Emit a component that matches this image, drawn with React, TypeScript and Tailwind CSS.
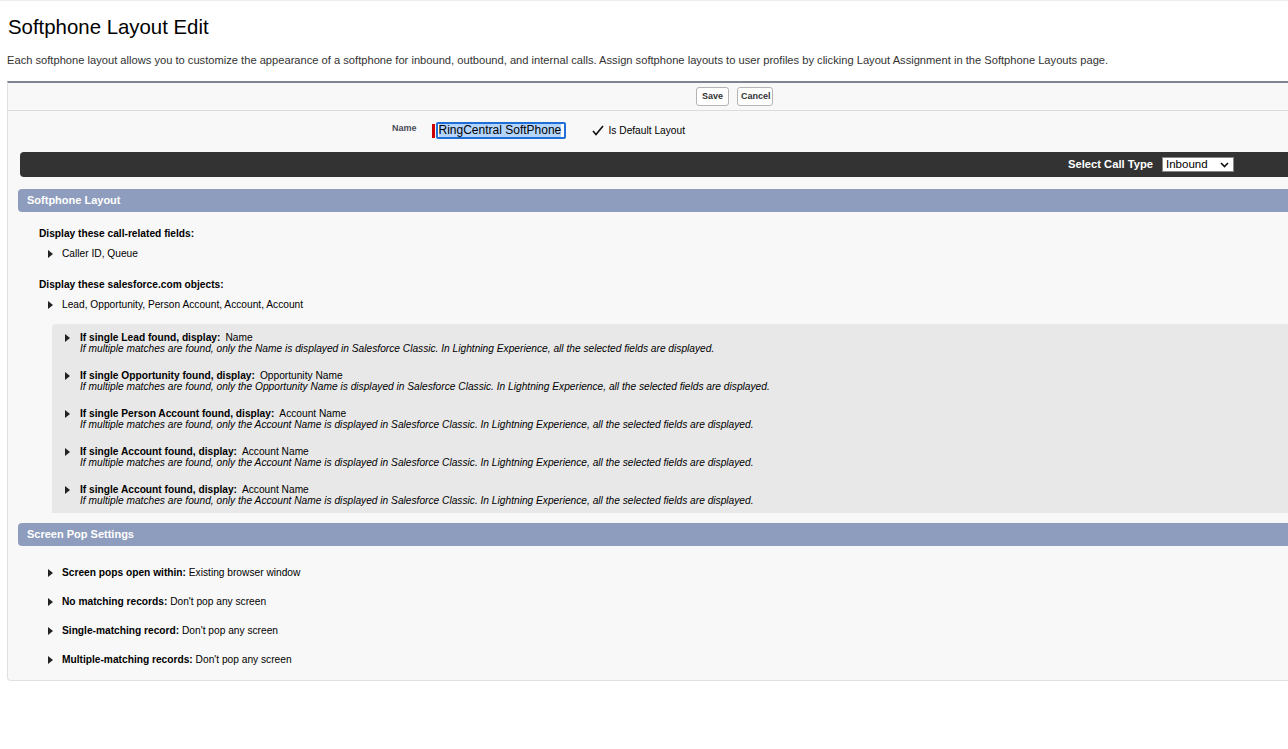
import React from "react";

const callFields = "Caller ID, Queue";
const objects = "Lead, Opportunity, Person Account, Account, Account";

interface ObjectRow {
  label: string;
  value: string;
  field: string;
}

const objectRows: ObjectRow[] = [
  { label: "If single Lead found, display:", value: "Name", field: "Name" },
  { label: "If single Opportunity found, display:", value: "Opportunity Name", field: "Opportunity Name" },
  { label: "If single Person Account found, display:", value: "Account Name", field: "Account Name" },
  { label: "If single Account found, display:", value: "Account Name", field: "Account Name" },
  { label: "If single Account found, display:", value: "Account Name", field: "Account Name" },
];

const popRows = [
  { label: "Screen pops open within:", value: "Existing browser window" },
  { label: "No matching records:", value: "Don't pop any screen" },
  { label: "Single-matching record:", value: "Don't pop any screen" },
  { label: "Multiple-matching records:", value: "Don't pop any screen" },
];

const Twisty: React.FC = () => (
  <svg width="5" height="8" viewBox="0 0 5 8" className="shrink-0">
    <path d="M0 0L5 4L0 8Z" fill="#222" />
  </svg>
);

const SectionHeader: React.FC<{ title: string }> = ({ title }) => (
  <div className="ml-[10px] h-[23px] flex items-center pl-[9px] bg-[#8e9dbd] rounded-l-[4px] text-white font-bold text-[11px]">
    {title}
  </div>
);

export default function App() {
  return (
    <div
      className="w-[1288px] h-[749px] overflow-hidden bg-white text-black border-t border-[#ececec]"
      style={{ fontFamily: '"Liberation Sans", Arial, sans-serif' }}
    >
      <h1 className="ml-[8px] mt-[14px] text-[20.4px] leading-[24px] font-normal">Softphone Layout Edit</h1>
      <p className="ml-[7px] mt-[14px] text-[11.15px] leading-[14px] text-[#333]">
        Each softphone layout allows you to customize the appearance of a softphone for inbound, outbound, and internal calls. Assign softphone layouts to user profiles by clicking Layout Assignment in the Softphone Layouts page.
      </p>

      {/* main panel */}
      <div className="ml-[7px] mt-[14px] w-[1310px] bg-[#f8f8f8] border-t-2 border-t-[#7d8494] border-l border-b border-[#e0e0e0] rounded-bl-[4px] pb-[14px]">
        {/* button row */}
        <div className="h-[28px] flex items-center border-b border-[#dcdcdc]">
          <div className="ml-[688px] flex gap-[8px]">
            <button className="h-[19px] px-[5px] bg-white border border-[#b5b5b5] rounded-[3px] text-[9px] font-bold text-[#333] leading-none w-[33px]">Save</button>
            <button className="h-[19px] px-[3px] bg-white border border-[#b5b5b5] rounded-[3px] text-[9px] font-bold text-[#333] leading-none w-[36px]">Cancel</button>
          </div>
        </div>

        {/* name row */}
        <div className="flex items-start pt-[11px] h-[41px]">
          <span className="ml-[384px] text-[9px] font-bold text-[#4a4a56] leading-[12px]">Name</span>
          <div className="ml-[15px] flex items-center">
            <div className="w-[3px] h-[14px] bg-[#c00]" />
            <div className="ml-[1px] w-[130px] h-[17px] border-2 border-[#1f6fd6] rounded-[2px] bg-white flex items-center px-[1px]">
              <span className="bg-[#b3d4fc] text-[12px] leading-[13px] text-black whitespace-nowrap">RingCentral SoftPhone</span>
            </div>
            <svg width="12" height="11" viewBox="0 0 12 11" className="ml-[26px]">
              <path d="M1 6L4 9.5L11 1" fill="none" stroke="#111" strokeWidth="1.6" />
            </svg>
            <span className="ml-[5px] text-[10.2px] text-black">Is Default Layout</span>
          </div>
        </div>

        {/* call type bar */}
        <div className="ml-[12px] h-[25px] bg-[#333] rounded-l-[4px] flex items-center justify-end pr-[83px]">
          <span className="text-white font-bold text-[11.2px] mr-[9px]">Select Call Type</span>
          <div className="w-[72px] h-[15px] bg-white border border-[#888] flex items-center justify-between pl-[3px] pr-[4px]">
            <span className="text-[11.5px] leading-none text-black">Inbound</span>
            <svg width="9" height="6" viewBox="0 0 9 6">
              <path d="M1 1L4.5 4.5L8 1" fill="none" stroke="#111" strokeWidth="1.6" />
            </svg>
          </div>
        </div>

        <div className="mt-[12px]">
          <SectionHeader title="Softphone Layout" />
        </div>

        <div className="ml-[31px] mt-[16px] text-[10.2px] leading-[12px]">
          <div className="font-bold">Display these call-related fields:</div>
          <div className="mt-[8px] ml-[9px] flex items-center gap-[9px]">
            <Twisty />
            <span>{callFields}</span>
          </div>
          <div className="mt-[19px] font-bold">Display these salesforce.com objects:</div>
          <div className="mt-[8px] ml-[9px] flex items-center gap-[9px]">
            <Twisty />
            <span>{objects}</span>
          </div>
        </div>

        {/* object detail box */}
        <div className="ml-[44px] mt-[13px] bg-[#e8e8e8] rounded-tl-[4px] pt-[8px] pb-[7px] flex flex-col gap-[16px]">
          {objectRows.map((row, i) => (
            <div key={i} className="ml-[13px] flex items-start gap-[10px] text-[10.2px] leading-[11px]">
              <div className="mt-[2px]">
                <Twisty />
              </div>
              <div>
                <div>
                  <span className="font-bold">{row.label}</span>
                  <span className="ml-[5px]">{row.value}</span>
                </div>
                <div className="italic">
                  If multiple matches are found, only the {row.field} is displayed in Salesforce Classic. In Lightning Experience, all the selected fields are displayed.
                </div>
              </div>
            </div>
          ))}
        </div>

        <div className="mt-[10px]">
          <SectionHeader title="Screen Pop Settings" />
        </div>

        <div className="ml-[40px] mt-[21px] flex flex-col gap-[17px] text-[10.2px] leading-[12px]">
          {popRows.map((row, i) => (
            <div key={i} className="flex items-center gap-[9px]">
              <Twisty />
              <span>
                <span className="font-bold">{row.label}</span> {row.value}
              </span>
            </div>
          ))}
        </div>
      </div>
    </div>
  );
}
